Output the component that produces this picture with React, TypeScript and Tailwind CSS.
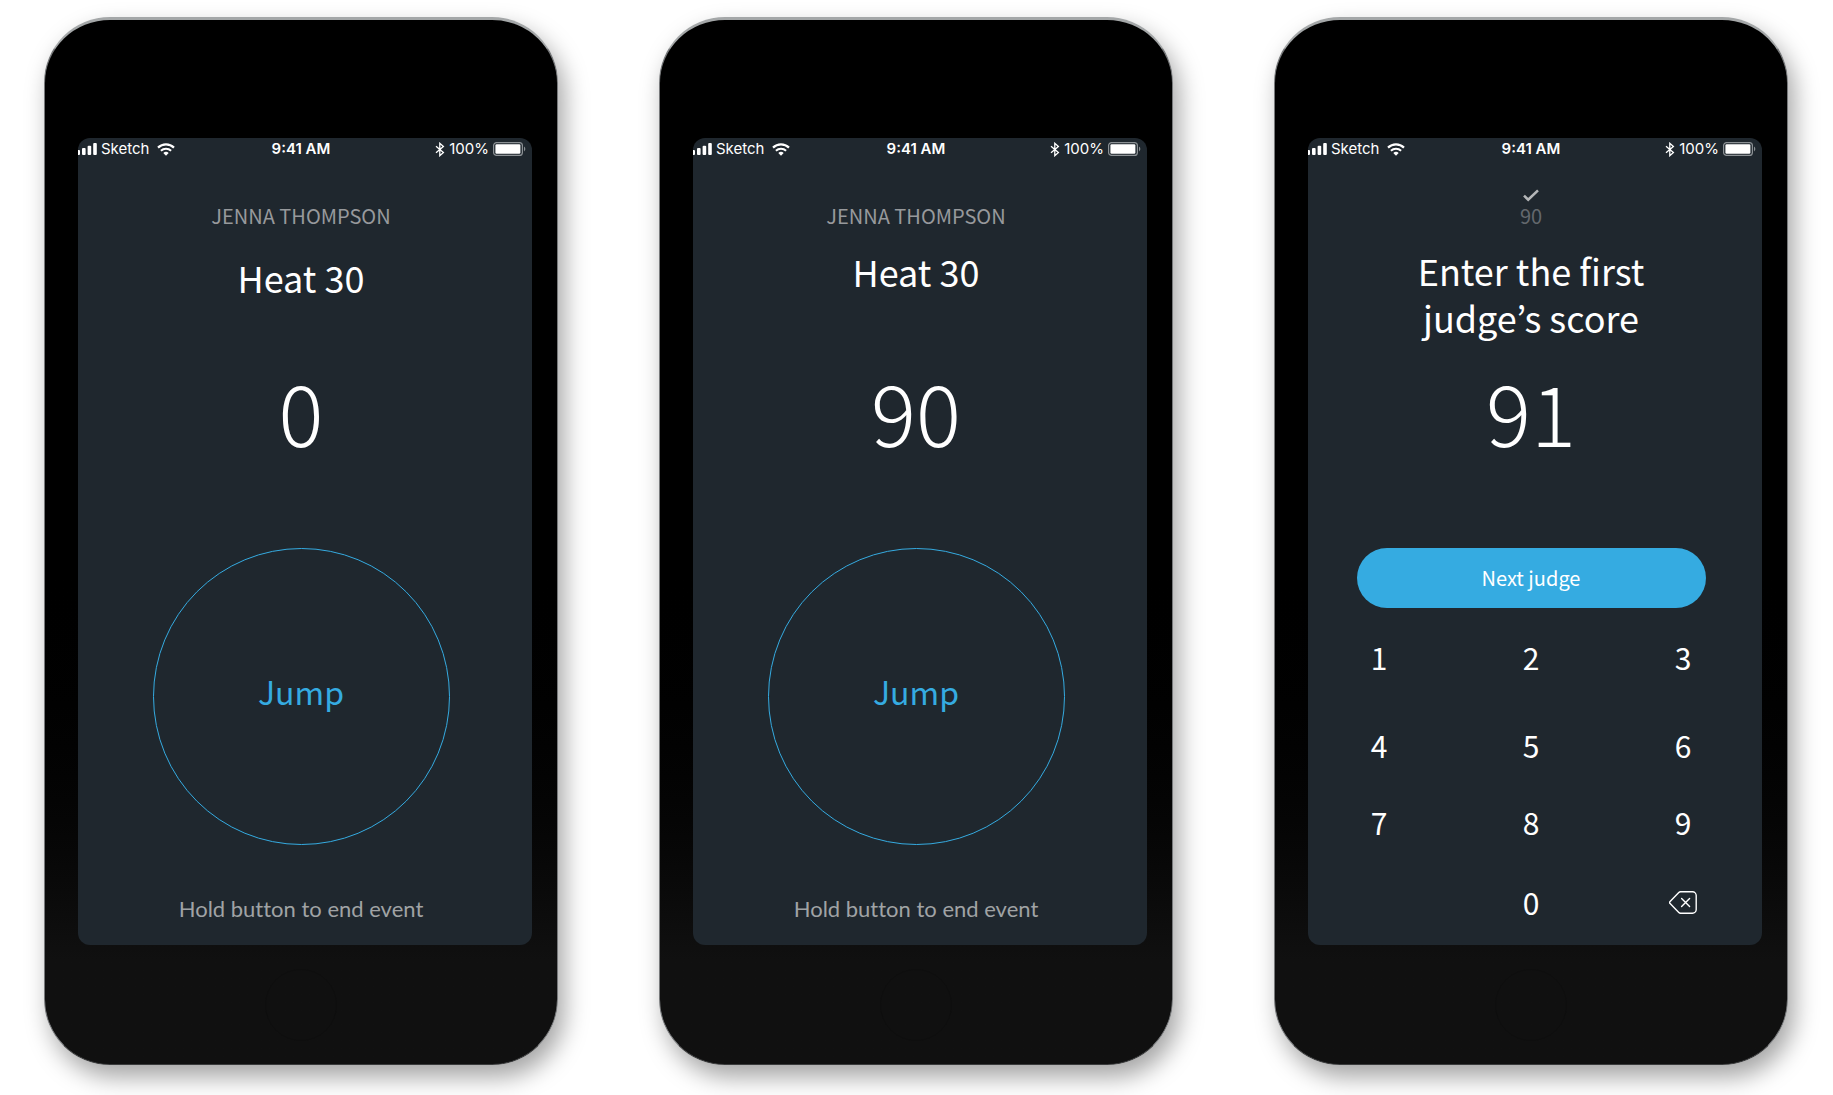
import type { ReactNode } from "react";

const sourceFont = "font-['Noto_Sans_CJK_KR','Noto_Sans',sans-serif]";

function SignalIcon() {
  return (
    <svg width="19" height="12" viewBox="0 0 19 12" fill="#fff" aria-hidden="true">
      <rect x="-1" y="7" width="3" height="5" rx="1" />
      <rect x="4" y="5" width="3.6" height="7" rx="1" />
      <rect x="9.6" y="2.8" width="3.6" height="9.2" rx="1" />
      <rect x="15.2" y="0" width="3.6" height="12" rx="1" />
    </svg>
  );
}

function WifiIcon() {
  return (
    <svg width="18" height="13" viewBox="0 0 18 13" fill="none" stroke="#fff" aria-hidden="true">
      <path d="M1 4.6a11.6 11.6 0 0 1 16 0" strokeWidth="2.2" />
      <path d="M3.9 7.7a7.4 7.4 0 0 1 10.2 0" strokeWidth="2" />
      <path d="M9 12.8 6.3 10.1a3.9 3.9 0 0 1 5.4 0z" fill="#fff" stroke="none" />
    </svg>
  );
}

function BluetoothIcon() {
  return (
    <svg width="10" height="15" viewBox="0 0 10 15" fill="none" stroke="#fff" strokeWidth="1.3" aria-hidden="true">
      <path d="M1 4.2l7.4 6.4L4.8 13.7V1.3l3.6 3.1L1 10.8" />
    </svg>
  );
}

function BatteryIcon() {
  return (
    <svg width="33" height="14" viewBox="0 0 33 14" aria-hidden="true">
      <rect x="0.6" y="0.6" width="28.8" height="12.8" rx="3" fill="none" stroke="#8b9094" strokeWidth="1.2" />
      <rect x="2.4" y="2.2" width="25" height="9.6" rx="1.2" fill="#fff" />
      <path d="M31 4.6c1.8.8 1.8 4 0 4.8z" fill="#8b9094" />
    </svg>
  );
}

function BackspaceIcon() {
  return (
    <svg width="28" height="23" viewBox="0 0 28 23" fill="none" stroke="#fff" strokeWidth="1.4" strokeLinejoin="round" strokeLinecap="round" aria-hidden="true">
      <path d="M11.5.8h12a3.7 3.7 0 0 1 3.7 3.7v14a3.7 3.7 0 0 1-3.7 3.7h-12q-1 0-1.7-.7L1.1 12.6q-1-1.1 0-2.2L9.8 1.5q.7-.7 1.7-.7z" />
      <path d="M12.6 7.6l8 8M20.6 7.6l-8 8" />
    </svg>
  );
}

function StatusBar() {
  return (
    <div className="grid h-[21px] grid-cols-[1fr_auto_1fr] items-center font-['Inter',sans-serif] text-[15px] text-white">
      <div className="flex items-center">
        <SignalIcon />
        <span className="ml-1 mr-2">Sketch</span>
        <WifiIcon />
      </div>
      <span className="font-semibold">9:41 AM</span>
      <div className="-mr-0.5 flex items-center justify-end gap-1">
        <BluetoothIcon />
        <span>100%</span>
        <BatteryIcon />
      </div>
    </div>
  );
}

function Phone({ label, children }: { label: string; children: ReactNode }) {
  return (
    <section
      aria-label={label}
      className="flex flex-col rounded-[66px] border-x border-t-3 border-b border-x-[#77797b] border-t-[#a4a7a8] border-b-[#3a3b3c] bg-linear-to-b from-black from-50% to-[#101010] to-90% pt-[118px] pr-[25px] pl-[33px] shadow-[6px_12px_24px_rgba(0,0,0,0.36)]"
    >
      <div className={`flex min-h-[807px] flex-col overflow-hidden rounded-xl bg-[#1f272e] pr-2 text-white ${sourceFont}`}>
        <StatusBar />
        {children}
      </div>
      <div className="mr-2 flex h-[119px] items-center justify-center">
        <div className="size-[72px] rounded-full border border-[#0e0e0e]" />
      </div>
    </section>
  );
}

function BigNumber({ value }: { value: number }) {
  return <output className="block text-center text-[84px] leading-20 font-light">{value}</output>;
}

function HeatScreen({ count, roomy }: { count: number; roomy?: boolean }) {
  return (
    <main className="flex flex-col items-center">
      <p className="mt-[43px] text-xl leading-7 text-[#97999c]">JENNA THOMPSON</p>
      <h1 className={roomy ? "mt-6 mb-[70px] text-4xl leading-[47px]" : "mt-[18px] mb-[76px] text-4xl leading-[47px]"}>Heat 30</h1>
      <BigNumber value={count} />
      <button className="mt-[97px] flex size-[297px] items-center justify-center rounded-full border border-[#35abe1] pb-3 text-[32px] text-[#35abe1]">
        Jump
      </button>
      <p className="mt-[50px] font-['Lato',sans-serif] text-[22px] leading-7 text-[#a0a3a5] [font-variant-ligatures:none]">Hold button to end event</p>
    </main>
  );
}

const keys = ["1", "2", "3", "4", "5", "6", "7", "8", "9"];

function ScoreScreen() {
  return (
    <main className="flex flex-col items-center">
      <svg className="mt-[30px]" width="16" height="13" viewBox="0 0 16 13" fill="none" stroke="#b4b6b8" strokeWidth="2.6" aria-hidden="true">
        <path d="M1 6.6l4.2 4L15 1.4" />
      </svg>
      <p className="text-xl leading-7 text-[#63686d]">90</p>
      <h1 className="mt-[17px] mb-[30px] text-center text-4xl leading-[47px]">
        Enter the first
        <br />
        judge’s score
      </h1>
      <BigNumber value={91} />
      <button className="mt-[97px] h-[60px] w-[349px] rounded-full bg-[#35abe1] text-xl">Next judge</button>
      <div className="grid w-[344px] grid-cols-[40px_40px_40px] grid-rows-[98px_78px_76px_84px] items-center justify-between text-3xl">
        {keys.map((key) => (
          <button key={key}>{key}</button>
        ))}
        <button className="col-start-2">0</button>
        <button aria-label="Delete" className="flex justify-center">
          <BackspaceIcon />
        </button>
      </div>
    </main>
  );
}

export default function App() {
  return (
    <div className="grid min-h-screen grid-cols-3 items-start gap-[101px] bg-white pt-[17px] pr-[45px] pl-11">
      <Phone label="Heat start">
        <HeatScreen count={0} roomy />
      </Phone>
      <Phone label="Heat in progress">
        <HeatScreen count={90} />
      </Phone>
      <Phone label="Judge score">
        <ScoreScreen />
      </Phone>
    </div>
  );
}
